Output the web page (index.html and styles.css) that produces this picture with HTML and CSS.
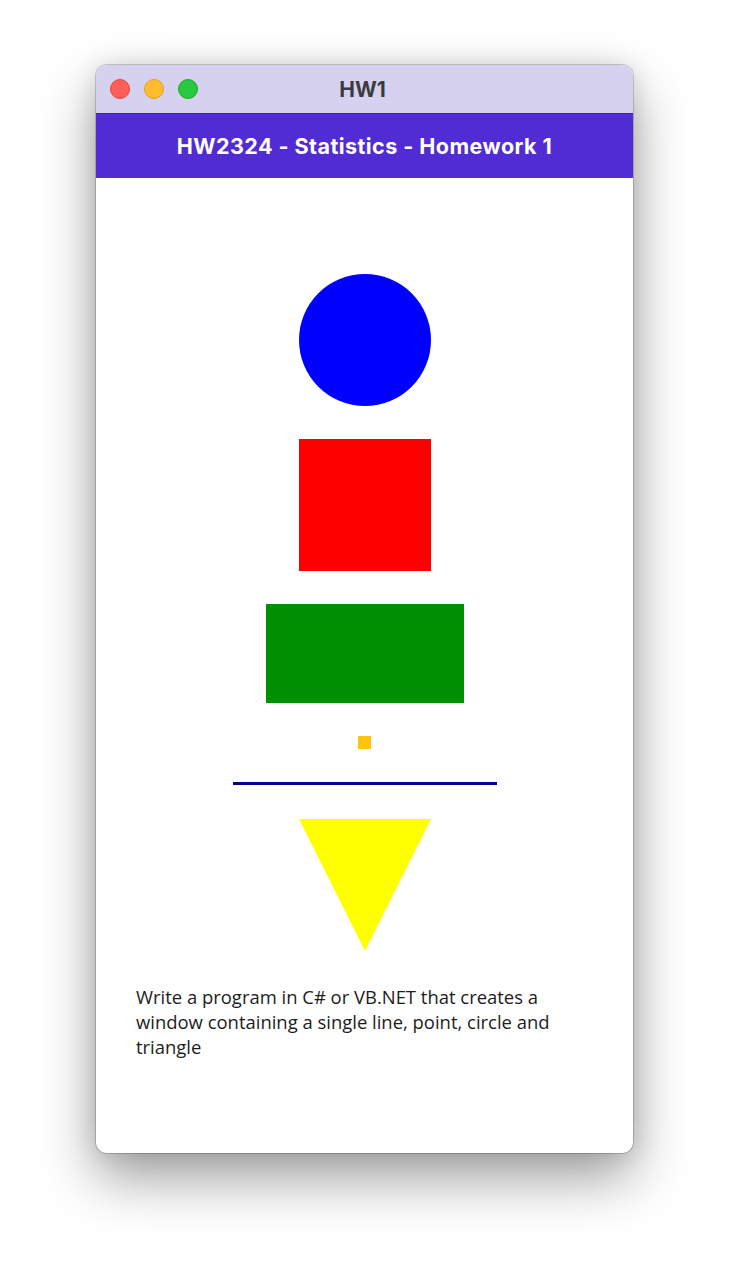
FILE: index.html
```html
<!DOCTYPE html>
<html>
<head>
<meta charset="utf-8">
<link rel="stylesheet" href="styles.css">
</head>
<body>
<div class="window">
  <div class="titlebar">
    <div class="lights">
      <span class="light red"></span>
      <span class="light yellow"></span>
      <span class="light green"></span>
    </div>
    <div class="title">HW1</div>
  </div>
  <div class="header">HW2324 - Statistics - Homework 1</div>
  <div class="content">
    <div class="circle"></div>
    <div class="square"></div>
    <div class="rect"></div>
    <div class="point"></div>
    <div class="line"></div>
    <svg class="triangle" width="132" height="132" viewBox="0 0 132 132"><polygon points="0,0 132,0 66,132" fill="#ffff00"/></svg>
    <p class="desc">Write a program in C# or VB.NET that creates a window containing a single line, point, circle and triangle</p>
  </div>
</div>
</body>
</html>
```

FILE: styles.css
```css
html, body {
  margin: 0;
  padding: 0;
  background: #ffffff;
}
body {
  padding-top: 65px;
  padding-left: 96px;
  height: 1280px;
  box-sizing: border-box;
}
.window {
  width: 537px;
  height: 1088px;
  border-radius: 11px;
  overflow: hidden;
  background: #ffffff;
  box-shadow: 0 0 0 1px rgba(0,0,0,0.18), 0 25px 55px rgba(0,0,0,0.38), 0 0 25px rgba(0,0,0,0.12);
  display: flex;
  flex-direction: column;
}
.titlebar {
  height: 48px;
  background: #d6d1ef;
  position: relative;
  display: flex;
  align-items: center;
  justify-content: center;
  box-sizing: border-box;
}
.lights {
  position: absolute;
  left: 14px;
  top: 14px;
  display: flex;
  gap: 14px;
}
.light {
  width: 20px;
  height: 20px;
  border-radius: 50%;
  box-sizing: border-box;
}
.light.red { background: #ff5f57; border: 1px solid #e0443e; }
.light.yellow { background: #febc2e; border: 1px solid #dea123; }
.light.green { background: #28c840; border: 1px solid #1aab29; }
.title {
  font-family: Inter, "Liberation Sans", sans-serif;
  font-weight: 700;
  font-size: 21px;
  color: #3b3b3f;
  margin-top: 1px;
  margin-right: 4px;
}
.header {
  height: 65px;
  background: #512bd4;
  border-top: 1px solid #3f1fb0;
  box-sizing: border-box;
  display: flex;
  align-items: center;
  justify-content: center;
  font-family: Inter, "Liberation Sans", sans-serif;
  font-weight: 700;
  font-size: 21.5px;
  letter-spacing: 0.45px;
  color: #ffffff;
}
.content {
  display: flex;
  flex-direction: column;
  align-items: center;
  padding-top: 96px;
  gap: 33px;
}
.circle {
  width: 132px;
  height: 132px;
  border-radius: 50%;
  background: #0000ff;
}
.square {
  width: 132px;
  height: 132px;
  background: #ff0000;
}
.rect {
  width: 198px;
  height: 99px;
  background: #008f00;
}
.point {
  width: 13px;
  height: 13px;
  background: #ffc20e;
}
.line {
  width: 264px;
  height: 3px;
  background: #00008b;
  margin-bottom: 1px;
}
.triangle {
  display: block;
}
.desc {
  align-self: stretch;
  margin: 0;
  padding: 0 40px;
  font-family: "Open Sans", "Liberation Sans", sans-serif;
  font-size: 18.45px;
  line-height: 25px;
  color: #1c1c1c;
}
```
